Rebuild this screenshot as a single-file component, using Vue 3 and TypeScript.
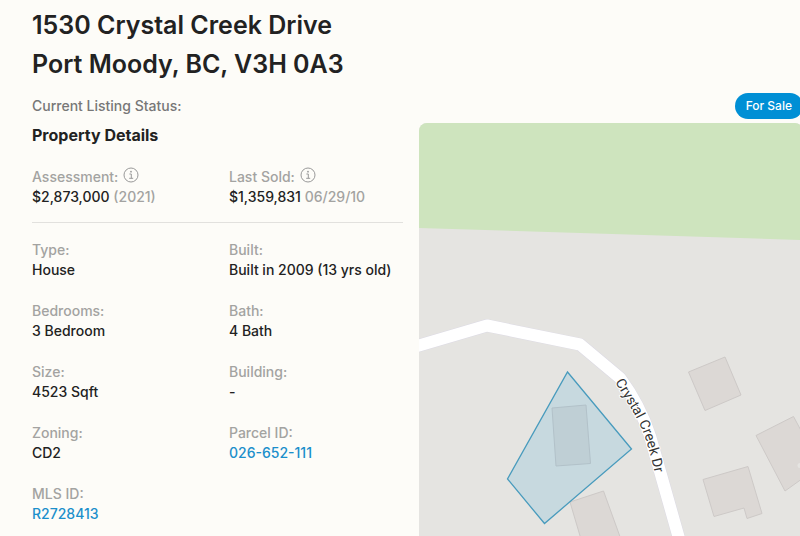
<script setup lang="ts">
interface Fact {
  label: string
  value: string
  note?: string
  info?: boolean
  href?: string
}

const address: string[] = ['1530 Crystal Creek Drive', 'Port Moody, BC, V3H 0A3']

const values: Fact[] = [
  { label: 'Assessment:', value: '$2,873,000', note: '(2021)', info: true },
  { label: 'Last Sold:', value: '$1,359,831', note: '06/29/10', info: true },
]

const details: Fact[] = [
  { label: 'Type:', value: 'House' },
  { label: 'Built:', value: 'Built in 2009 (13 yrs old)' },
  { label: 'Bedrooms:', value: '3 Bedroom' },
  { label: 'Bath:', value: '4 Bath' },
  { label: 'Size:', value: '4523 Sqft' },
  { label: 'Building:', value: '-' },
  { label: 'Zoning:', value: 'CD2' },
  { label: 'Parcel ID:', value: '026-652-111', href: '#parcel' },
  { label: 'MLS ID:', value: 'R2728413', href: '#mls' },
]
</script>

<template>
  <main class="page">
    <h1 class="address">
      <span v-for="line in address" :key="line">{{ line }}</span>
    </h1>

    <div class="columns">
      <section class="summary">
        <p class="status">Current Listing Status:</p>
        <h2 class="title">Property Details</h2>

        <dl class="facts values">
          <div v-for="fact in values" :key="fact.label" class="fact">
            <dt>
              {{ fact.label }}
              <svg v-if="fact.info" class="info" viewBox="0 0 16 16" aria-hidden="true">
                <circle cx="8" cy="8" r="7" />
                <path d="M6.4 7H8.3V11.3M6.2 11.3H10.2" />
                <circle class="dot" cx="8" cy="4.7" r="0.9" />
              </svg>
            </dt>
            <dd>{{ fact.value }} <span class="note">{{ fact.note }}</span></dd>
          </div>
        </dl>

        <dl class="facts details">
          <div v-for="fact in details" :key="fact.label" class="fact">
            <dt>{{ fact.label }}</dt>
            <dd>
              <a v-if="fact.href" :href="fact.href">{{ fact.value }}</a>
              <template v-else>{{ fact.value }}</template>
            </dd>
          </div>
        </dl>
      </section>

      <section class="location">
        <span class="badge">For Sale</span>
        <div class="map">
          <svg viewBox="419 123 384 413" preserveAspectRatio="xMinYMin slice" role="img">
            <rect class="land" x="419" y="123" width="384" height="413" />
            <path class="park" d="M419 123H803V240L660 235.5L419 228Z" />
            <g class="building">
              <path d="M688.5 372L725 357L741 395L705 410.500Z" />
              <path d="M756 435.500L793.500 416.500L820 466L785 491Z" />
              <path d="M703 479.500L748 466.500L762 513.500L747 518.500L744 508L714 516.500Z" />
              <path d="M570 502L603.500 491L623 545L586 556Z" />
              <path d="M552 408L586 405L590.500 463.500L556 466Z" />
            </g>
            <circle class="land" cx="800" cy="465.500" r="2.500" />
            <path class="road-edge" d="M409 348.500L487 325.500L580 344.500L620 378Q640 405 650 436L684 556" />
            <path class="road" d="M409 348.500L487 325.500L580 344.500L620 378Q640 405 650 436L684 556" />
            <path class="parcel" d="M567.500 372L631.500 449L544.500 523.500L507.500 479Z" />
            <path id="street" fill="none" d="M615 382L632 410Q647 434 655 475" />
            <text class="street"><textPath href="#street">Crystal Creek Dr</textPath></text>
          </svg>
        </div>
      </section>
    </div>
  </main>
</template>

<style>
body {
  background: #fdfcf8;
}
</style>

<style scoped>
.page {
  box-sizing: border-box;
  display: flex;
  flex-direction: column;
  height: 100vh;
  padding: 6px 0 0 32px;
  overflow: hidden;
  background: #fdfcf8;
  color: #222;
  font-family: Inter, "Liberation Sans", sans-serif;
  font-size: 14px;
}

.address {
  display: flex;
  flex-direction: column;
  margin: 0;
  font-size: 25px;
  font-weight: 600;
  line-height: 39px;
}

.columns {
  display: grid;
  flex: 1;
  grid-template-columns: 371fr 384fr;
  gap: 16px;
  min-height: 0;
  margin: 9px -3px 0 0;
}

.status {
  margin: 2px 0 0;
  color: #777;
  font-weight: 500;
  line-height: 21px;
}

.title {
  margin: 8px 0 0;
  font-size: 16px;
  font-weight: 700;
  line-height: 22px;
}

.facts {
  display: grid;
  grid-template-columns: 197fr 174fr;
  gap: 20px 0;
  margin: 0;
}

.values {
  padding: 20px 0 15px;
  border-bottom: 1px solid #e2e1de;
}

.details {
  padding-top: 16px;
}

.fact dt {
  display: flex;
  align-items: center;
  gap: 5px;
  color: #a3a3a1;
  font-weight: 500;
  line-height: 21px;
}

.fact dd {
  margin: 0;
  font-weight: 500;
  line-height: 20px;
  white-space: nowrap;
}

.note {
  color: #a3a3a1;
}

.fact a {
  color: #1b8fcb;
  text-decoration: none;
}

.info {
  width: 16px;
  height: 16px;
  margin-bottom: 4px;
  fill: none;
  stroke: #999;
  stroke-width: 1;
}

.info .dot {
  fill: #999;
  stroke: none;
}

.location {
  display: flex;
  flex-direction: column;
  align-items: flex-end;
  gap: 4px;
  min-width: 0;
}

.badge {
  padding: 0 11px;
  border-radius: 13px;
  background: #008fd5;
  color: #fff;
  font-size: 12px;
  font-weight: 500;
  line-height: 26px;
}

.map {
  flex: 1;
  align-self: stretch;
  min-height: 0;
  border-radius: 8px 8px 0 0;
  overflow: hidden;
}

.map svg {
  display: block;
  width: 100%;
  height: 100%;
}

.land {
  fill: #e5e4e1;
}

.park {
  fill: #cee4be;
}

.building {
  fill: #dcd8d5;
  stroke: #cdc9c7;
  stroke-width: 1;
}

.road-edge,
.road {
  fill: none;
  stroke: #dcdae4;
  stroke-linejoin: round;
  stroke-width: 13;
}

.road {
  stroke: #fff;
  stroke-width: 12;
}

.parcel {
  fill: rgb(0 143 213 / 13%);
  stroke: #489bbd;
  stroke-width: 1.3;
}

.street {
  fill: #333;
  stroke: #fff;
  stroke-width: 2;
  paint-order: stroke;
  font-family: Roboto, sans-serif;
  font-size: 14px;
}
</style>
